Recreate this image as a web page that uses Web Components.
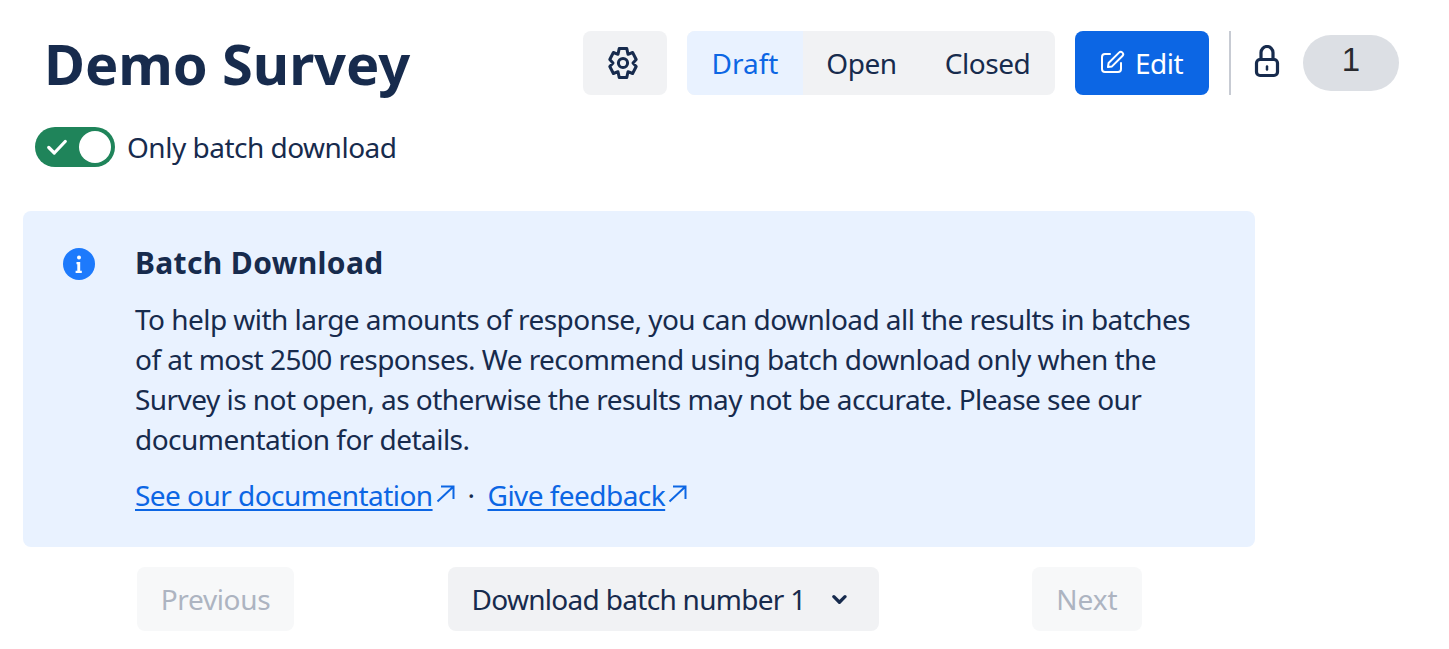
<!DOCTYPE html>
<html>
<head>
<meta charset="utf-8">
<title>Demo Survey</title>
<style>
  html, body { margin: 0; background: #fff; }
  body { font-family: "Noto Sans", "Open Sans", sans-serif; color: #172b4d; }
</style>
</head>
<body>
<survey-page></survey-page>

<script>
const GEAR = `<svg width="32" height="32" viewBox="0 0 32 32" fill="none" stroke="currentColor" stroke-width="3" stroke-linejoin="round"><path d="M12.2 1.6h7.6l1.2 5.7 4.6-1.8 3.6 7-3.2 3.5 3.2 3.5-3.6 7-4.6-1.8-1.2 5.7h-7.6l-1.2-5.7-4.6 1.8-3.6-7 3.2-3.5-3.2-3.5 3.6-7 4.6 1.8z"/><circle cx="16" cy="16" r="4.6"/></svg>`;

class SurveyButton extends HTMLElement {
  constructor() {
    super();
    this.attachShadow({ mode: 'open' });
    this.shadowRoot.innerHTML = `
      <style>
        :host {
          display: inline-flex;
          align-items: center;
          justify-content: center;
          gap: 10px;
          height: 64px;
          padding: 0 24px;
          box-sizing: border-box;
          border-radius: 8px;
          background: #f1f2f4;
          color: #172b4d;
          font-size: 28px;
          letter-spacing: -0.5px;
          white-space: nowrap;
        }
        :host([variant="primary"]) { background: #0c66e4; color: #fff; }
        :host([disabled]) { background: #f7f8f9; color: #adb4c1; }
      </style>
      <slot></slot>
    `;
  }
}

class SegmentControl extends HTMLElement {
  constructor() {
    super();
    this.attachShadow({ mode: 'open' });
    this.shadowRoot.innerHTML = `
      <style>
        :host {
          display: flex;
          height: 64px;
          border-radius: 8px;
          overflow: hidden;
          background: #f1f2f4;
          font-size: 28px;
          letter-spacing: -0.45px;
        }
        div { display: flex; align-items: center; justify-content: center; }
        .draft { width: 116px; background: #e9f2ff; color: #0c66e4; letter-spacing: 0; }
        .open { width: 117px; }
        .closed { width: 135px; }
      </style>
      <div class="draft">Draft</div>
      <div class="open">Open</div>
      <div class="closed">Closed</div>
    `;
  }
}

class SurveyHeader extends HTMLElement {
  constructor() {
    super();
    this.attachShadow({ mode: 'open' });
    this.shadowRoot.innerHTML = `
      <style>
        :host {
          display: flex;
          justify-content: space-between;
          align-items: center;
          padding: 31px 50px 0 44px;
        }
        h1 { margin: 0; font-size: 56px; font-weight: 700; line-height: 64px; letter-spacing: -0.1px; color: #172b4d; }
        .actions { display: flex; align-items: center; gap: 20px; }
        .gear { width: 84px; padding: 0 4px 0 0; }
        .edit { width: 134px; padding: 0 2px 0 0; }
        .divider { width: 2px; height: 64px; background: #c7cbd3; }
        .lock { display: flex; color: #172b4d; }
        .pill {
          display: flex; align-items: center; justify-content: center;
          width: 96px; height: 56px;
          border-radius: 28px; background: #dcdfe4; color: #292a2e;
          font: 33px "Liberation Sans", sans-serif;
          padding-bottom: 6px; box-sizing: border-box;
        }
      </style>
      <h1>Demo Survey</h1>
      <div class="actions">
        <survey-button class="gear">${GEAR}</survey-button>
        <segment-control></segment-control>
        <survey-button class="edit" variant="primary">
          <svg width="26" height="26" viewBox="0 0 26 26" fill="none" stroke="currentColor" stroke-width="2" stroke-linecap="round" stroke-linejoin="round"><path d="M11 4H6a3 3 0 0 0-3 3v12a3 3 0 0 0 3 3h13a3 3 0 0 0 3-3v-6"/><path d="M20 2.6a2.4 2.4 0 0 1 3.4 3.4L13 16.4 9 17l.6-4z"/></svg>
          Edit
        </survey-button>
        <div class="divider"></div>
        <div class="lock">
          <svg width="32" height="36" viewBox="0 0 32 36" fill="none" stroke="currentColor" stroke-width="3.2" stroke-linecap="round"><rect x="5.5" y="14.5" width="21" height="16" rx="3.5"/><path d="M10 14.5V7.5a6 6 0 0 1 12 0v7"/><path d="M16 21.5v3" stroke-width="2.5"/></svg>
        </div>
        <div class="pill">1</div>
      </div>
    `;
  }
}

class ToggleSwitch extends HTMLElement {
  constructor() {
    super();
    this.attachShadow({ mode: 'open' });
    this.shadowRoot.innerHTML = `
      <style>
        :host { display: flex; align-items: center; gap: 12px; font-size: 28px; letter-spacing: -0.5px; margin: 32px 0 0 35px; height: 40px; }
        .track {
          display: flex; align-items: center; justify-content: space-between;
          width: 80px; height: 40px; padding: 0 4px 0 12px; box-sizing: border-box;
          border-radius: 20px; background: #1f845a;
        }
        .knob { width: 32px; height: 32px; border-radius: 50%; background: #fff; }
      </style>
      <div class="track">
        <svg width="20" height="16" viewBox="0 0 20 16" fill="none" stroke="#fff" stroke-width="3.2" stroke-linecap="round" stroke-linejoin="round"><path d="M1.8 8.5l5.5 5.5L18.2 2.5"/></svg>
        <div class="knob"></div>
      </div>
      <slot></slot>
    `;
  }
}

class InfoAlert extends HTMLElement {
  constructor() {
    super();
    this.attachShadow({ mode: 'open' });
    this.shadowRoot.innerHTML = `
      <style>
        :host {
          display: flex;
          gap: 40px;
          width: 1232px;
          box-sizing: border-box;
          margin: 44px 0 0 23px;
          padding: 32px 48px 32px 40px;
          border-radius: 8px;
          background: #e9f2ff;
          font-size: 28px;
          letter-spacing: -0.54px;
        }
        .icon { flex: none; margin-top: 5px; }
        .title { font-size: 30px; font-weight: 700; line-height: 40px; margin-bottom: 16px; letter-spacing: 0.35px; }
        p { margin: 0; line-height: 40px; }
        .links { display: flex; align-items: center; gap: 13px; margin-top: 16px; line-height: 40px; }
      </style>
      <svg class="icon" width="32" height="32" viewBox="0 0 32 32"><circle cx="16" cy="16" r="16" fill="#1d7afc"/><circle cx="16" cy="9.5" r="2" fill="#fff"/><path d="M13.5 14h3.7v8.8h1.6V25h-6.2v-2.2h1.7v-6.6h-.8z" fill="#fff"/></svg>
      <div>
        <div class="title"><slot name="title"></slot></div>
        <p><slot></slot></p>
        <div class="links"><slot name="links"></slot></div>
      </div>
    `;
  }
}

class ExtLink extends HTMLElement {
  constructor() {
    super();
    this.attachShadow({ mode: 'open' });
    this.shadowRoot.innerHTML = `
      <style>
        :host { display: inline-flex; align-items: center; color: #0c66e4; }
        span { text-decoration: underline; text-underline-offset: 3px; text-decoration-thickness: 2px; }
        svg { margin: -4px 0 0 2px; }
      </style>
      <span><slot></slot></span>
      <svg width="20" height="20" viewBox="0 0 20 20" fill="none" stroke="currentColor" stroke-width="2"><path d="M2.5 18.5L18.5 3.5M6 3.5h12.5V16"/></svg>
    `;
  }
}

class BatchFooter extends HTMLElement {
  constructor() {
    super();
    this.attachShadow({ mode: 'open' });
    this.shadowRoot.innerHTML = `
      <style>
        :host {
          display: flex;
          justify-content: space-between;
          width: 1232px;
          box-sizing: border-box;
          margin: 20px 0 0 23px;
          padding: 0 113px 0 114px;
        }
        .prev { width: 157px; padding: 0; letter-spacing: -0.35px; }
        .next { width: 110px; padding: 0; letter-spacing: 0; }
        .middle { width: 431px; padding: 0 32px 0 24px; gap: 26px; letter-spacing: -0.7px; }
      </style>
      <survey-button class="prev" disabled>Previous</survey-button>
      <survey-button class="middle">Download batch number 1
        <svg width="16" height="16" viewBox="0 0 16 16" fill="none" stroke="currentColor" stroke-width="3.5" stroke-linecap="round" stroke-linejoin="round"><path d="M2 5.5l6 6 6-6"/></svg>
      </survey-button>
      <survey-button class="next" disabled>Next</survey-button>
    `;
  }
}

class SurveyPage extends HTMLElement {
  constructor() {
    super();
    this.attachShadow({ mode: 'open' });
    this.shadowRoot.innerHTML = `
      <style>:host { display: block; }</style>
      <survey-header></survey-header>
      <toggle-switch>Only batch download</toggle-switch>
      <info-alert>
        <span slot="title">Batch Download</span>
        To help with large amounts of response, you can download all the results in batches of at most 2500 responses. We recommend using batch download only when the Survey is not open, as otherwise the results may not be accurate. Please see our documentation for details.
        <ext-link slot="links">See our documentation</ext-link>
        <span slot="links">·</span>
        <ext-link slot="links">Give feedback</ext-link>
      </info-alert>
      <batch-footer></batch-footer>
    `;
  }
}

customElements.define('survey-button', SurveyButton);
customElements.define('segment-control', SegmentControl);
customElements.define('survey-header', SurveyHeader);
customElements.define('toggle-switch', ToggleSwitch);
customElements.define('info-alert', InfoAlert);
customElements.define('ext-link', ExtLink);
customElements.define('batch-footer', BatchFooter);
customElements.define('survey-page', SurveyPage);
</script>
</body>
</html>
